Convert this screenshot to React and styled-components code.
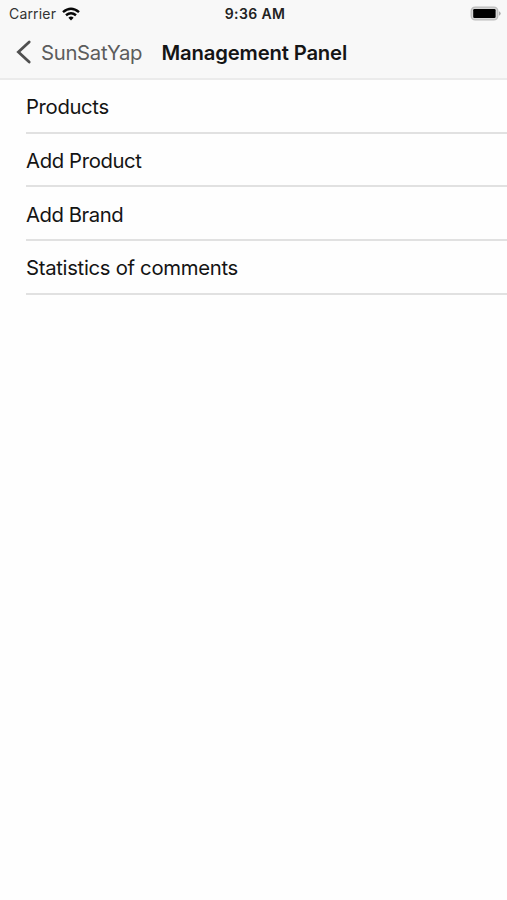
import React from "react";
import styled, { createGlobalStyle } from "styled-components";

const GlobalStyle = createGlobalStyle`
  * { box-sizing: border-box; }
  body { margin: 0; background: #fefefe; overflow: hidden; }
`;

const Screen = styled.div`
  display: flex;
  flex-direction: column;
  height: 900px;
  background: #fefefe;
  color: #141414;
  font-family: Inter, "Liberation Sans", sans-serif;
  white-space: nowrap;
`;

const Header = styled.header`
  height: 80px;
  background: #f8f8f8;
  border-bottom: 2px solid #ebebeb;
`;

const StatusBar = styled.div`
  display: grid;
  grid-template-columns: 1fr auto 1fr;
  align-items: center;
  height: 27px;
  padding: 0 6px 0 9px;
`;

const Carrier = styled.div`
  display: flex;
  align-items: center;
  gap: 6px;
  font-size: 14px;
  letter-spacing: 0.17px;
  color: #333;
`;

const Clock = styled.time`
  font-size: 14px;
  font-weight: 600;
  letter-spacing: 0.38px;
  color: #222;
`;

const BatteryIcon = styled.svg`
  justify-self: end;
`;

const NavBar = styled.nav`
  display: flex;
  align-items: center;
  height: 50px;
  padding-left: 16px;
`;

const BackButton = styled.a`
  display: flex;
  align-items: center;
  gap: 9px;
  width: 145.5px;
  color: #5c5c5c;
  font-size: 20.3px;
  letter-spacing: -0.3px;
`;

const Title = styled.h1`
  margin: 0;
  font-size: 20.3px;
  font-weight: 600;
  letter-spacing: -0.17px;
  color: #151515;
`;

const Menu = styled.ul`
  margin: 0;
  padding: 0 0 0 26px;
  list-style: none;
`;

const MenuItem = styled.li`
  display: flex;
  align-items: center;
  height: 53.7px;
  padding-top: 2px;
  border-bottom: 2px solid #e1e1e1;
  font-size: 20.3px;
  letter-spacing: ${({ $tracking }) => $tracking}px;
`;

const items = [
  { label: "Products", tracking: -0.34 },
  { label: "Add Product", tracking: -0.36 },
  { label: "Add Brand", tracking: -0.45 },
  { label: "Statistics of comments", tracking: -0.3 },
];

export default function App() {
  return (
    <Screen>
      <GlobalStyle />
      <Header>
        <StatusBar>
          <Carrier>
            Carrier
            <svg width="18" height="14" viewBox="0 0 18 14" fill="none" stroke="#080808" strokeWidth="2.5">
              <path d="M1 5.1Q9 -1.7 17 5.1" />
              <path d="M4 8.3Q9 4.1 14 8.3" />
              <path d="M6.4 10.8Q9 8.4 11.6 10.8L9 13.5Z" fill="#080808" stroke="none" />
            </svg>
          </Carrier>
          <Clock>9:36 AM</Clock>
          <BatteryIcon width="31" height="15" viewBox="0 0 31 15">
            <rect x="1.2" y="1.1" width="26.6" height="12.8" rx="4" fill="#d6d6d6" stroke="#bcbcbc" strokeWidth="1.3" />
            <rect x="3.2" y="3.1" width="22.4" height="8.8" rx="1.2" fill="#000" />
            <path d="M29 5.2Q30.7 6 30.7 7.5Q30.7 9 29 9.8Z" fill="#aaa" />
          </BatteryIcon>
        </StatusBar>
        <NavBar>
          <BackButton>
            <svg width="16" height="24" viewBox="0 0 16 24" fill="none" stroke="#505050" strokeWidth="2.8" strokeLinecap="round">
              <path d="M13.2 2L2.4 12L13.2 22" />
            </svg>
            SunSatYap
          </BackButton>
          <Title>Management Panel</Title>
        </NavBar>
      </Header>
      <Menu>
        {items.map(({ label, tracking }) => (
          <MenuItem key={label} $tracking={tracking}>
            {label}
          </MenuItem>
        ))}
      </Menu>
    </Screen>
  );
}
